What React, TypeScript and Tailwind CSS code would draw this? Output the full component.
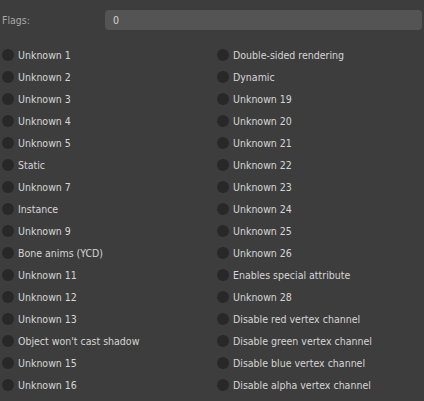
const LEFT = [
  'Unknown 1',
  'Unknown 2',
  'Unknown 3',
  'Unknown 4',
  'Unknown 5',
  'Static',
  'Unknown 7',
  'Instance',
  'Unknown 9',
  'Bone anims (YCD)',
  'Unknown 11',
  'Unknown 12',
  'Unknown 13',
  "Object won't cast shadow",
  'Unknown 15',
  'Unknown 16',
]

const RIGHT = [
  'Double-sided rendering',
  'Dynamic',
  'Unknown 19',
  'Unknown 20',
  'Unknown 21',
  'Unknown 22',
  'Unknown 23',
  'Unknown 24',
  'Unknown 25',
  'Unknown 26',
  'Enables special attribute',
  'Unknown 28',
  'Disable red vertex channel',
  'Disable green vertex channel',
  'Disable blue vertex channel',
  'Disable alpha vertex channel',
]

function Flag({ label }: { label: string }) {
  return (
    <div className="flex h-[22px] items-center gap-[4px]">
      <span className="h-[12px] w-[12px] shrink-0 rounded-full bg-[#282828]" />
      <span className="whitespace-nowrap pt-px text-[#d6d6d6]">{label}</span>
    </div>
  )
}

export default function App() {
  return (
    <div className="h-[401px] w-[424px] overflow-hidden bg-[#3d3d3d] pl-[2px] pt-[10px] font-['DejaVu_Sans_Condensed','DejaVu_Sans',sans-serif] text-[10.5px] [font-stretch:condensed]">
      <div className="flex h-[20px] items-center">
        <span className="w-[103px] pt-px text-[#a8a8a8]">Flags:</span>
        <div className="flex h-[20px] w-[317px] items-center rounded-[4px] bg-[#545454] pl-[8px] pt-px text-[#d6d6d6]">
          0
        </div>
      </div>
      <div className="mt-[14px] grid grid-cols-[215px_1fr]">
        <div className="flex flex-col">
          {LEFT.map((l) => (
            <Flag key={l} label={l} />
          ))}
        </div>
        <div className="flex flex-col">
          {RIGHT.map((l) => (
            <Flag key={l} label={l} />
          ))}
        </div>
      </div>
    </div>
  )
}
